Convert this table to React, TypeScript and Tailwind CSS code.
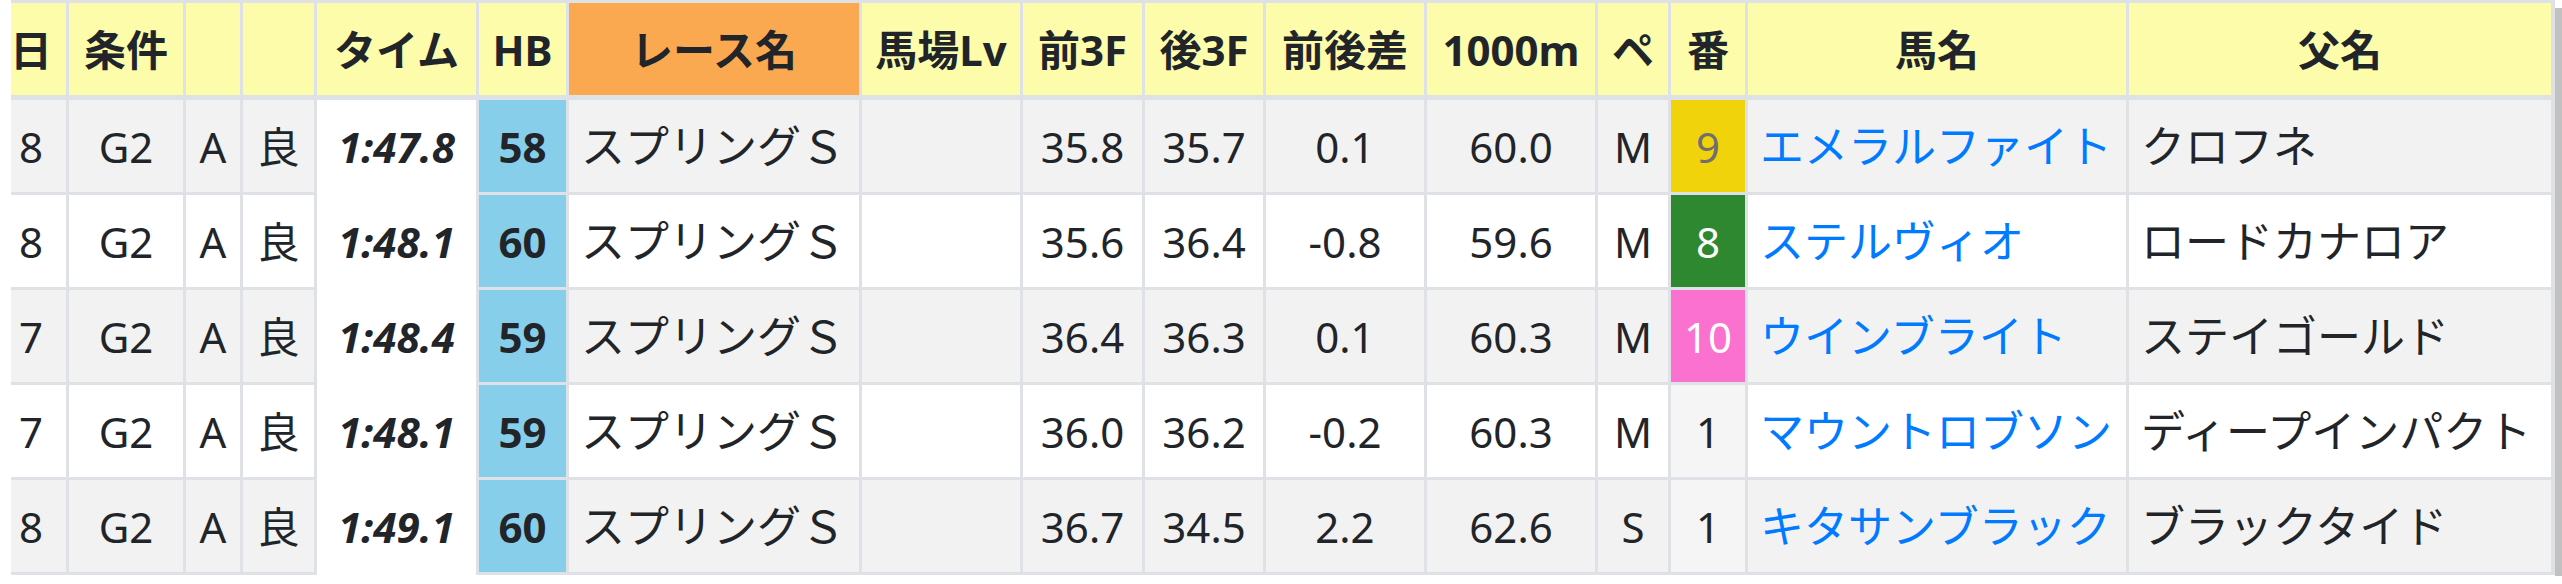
const COLS =
  "grid grid-cols-[55px_114px_54px_71px_159px_87px_290px_158px_119px_118px_158px_168px_70px_74px_378px_422px] gap-x-[3px]";

type Row = {
  day: string;
  cls: string;
  course: string;
  going: string;
  time: string;
  hb: string;
  race: string;
  f3: string;
  l3: string;
  diff: string;
  km: string;
  pace: string;
  no: string;
  noCls: string;
  horse: string;
  sire: string;
};

const rows: Row[] = [
  { day: "8", cls: "G2", course: "A", going: "良", time: "1:47.8", hb: "58", race: "スプリングＳ", f3: "35.8", l3: "35.7", diff: "0.1", km: "60.0", pace: "M", no: "9", noCls: "bg-[#f1d30b] text-[#6f6f6f]", horse: "エメラルファイト", sire: "クロフネ" },
  { day: "8", cls: "G2", course: "A", going: "良", time: "1:48.1", hb: "60", race: "スプリングＳ", f3: "35.6", l3: "36.4", diff: "-0.8", km: "59.6", pace: "M", no: "8", noCls: "bg-[#2e8830] text-white", horse: "ステルヴィオ", sire: "ロードカナロア" },
  { day: "7", cls: "G2", course: "A", going: "良", time: "1:48.4", hb: "59", race: "スプリングＳ", f3: "36.4", l3: "36.3", diff: "0.1", km: "60.3", pace: "M", no: "10", noCls: "bg-[#fb71cf] text-white", horse: "ウインブライト", sire: "ステイゴールド" },
  { day: "7", cls: "G2", course: "A", going: "良", time: "1:48.1", hb: "59", race: "スプリングＳ", f3: "36.0", l3: "36.2", diff: "-0.2", km: "60.3", pace: "M", no: "1", noCls: "bg-[#f5f5f5] text-[#212529]", horse: "マウントロブソン", sire: "ディープインパクト" },
  { day: "8", cls: "G2", course: "A", going: "良", time: "1:49.1", hb: "60", race: "スプリングＳ", f3: "36.7", l3: "34.5", diff: "2.2", km: "62.6", pace: "S", no: "1", noCls: "bg-[#f5f5f5] text-[#212529]", horse: "キタサンブラック", sire: "ブラックタイド" },
];

const headers = ["日", "条件", "", "", "タイム", "HB", "レース名", "馬場Lv", "前3F", "後3F", "前後差", "1000m", "ペ", "番", "馬名", "父名"];

export default function App() {
  return (
    <div className="flex h-[584px] w-[2562px] bg-white font-['Noto_Sans','Noto_Sans_CJK_JP',sans-serif] text-[42px] text-[#212529]">
      <div className="ml-[11px] w-[2544px] self-start bg-[#dee2e6] pt-[3px] pr-[4px] pb-[3px]">
        <div className={COLS}>
          {headers.map((h, i) => (
            <div
              key={i}
              className={`flex h-[92px] items-center justify-center font-bold ${
                i === 6 ? "bg-[#fba950]" : "bg-[#fcfcab]"
              } ${i === 0 ? "pr-[15px]" : ""}`}
            >
              {h}
            </div>
          ))}
        </div>

        <div className={`${COLS} mt-[5px] gap-y-[3px]`}>
          {/* time column has no row rules */}
          <div className="col-start-5 row-span-5 row-start-1 -mb-[3px] flex flex-col gap-[3px] bg-white">
            {rows.map((r, i) => (
              <div key={i} className="flex h-[92px] items-center justify-center font-bold italic">
                {r.time}
              </div>
            ))}
          </div>

          {rows.map((r, i) => {
            const bg = i % 2 === 0 ? "bg-[#f2f2f2]" : "bg-white";
            const c = `flex h-[92px] items-center justify-center ${bg}`;
            const l = `flex h-[92px] items-center pl-[12px] text-[44px] ${bg}`;
            return [
              <div key={`${i}-d`} className={`${c} pr-[15px]`}>{r.day}</div>,
              <div key={`${i}-c`} className={c}>{r.cls}</div>,
              <div key={`${i}-a`} className={c}>{r.course}</div>,
              <div key={`${i}-g`} className={c}>{r.going}</div>,
              <div key={`${i}-hb`} className="flex h-[92px] items-center justify-center bg-[#87ceeb] font-bold">{r.hb}</div>,
              <div key={`${i}-r`} className={l}>{r.race}</div>,
              <div key={`${i}-lv`} className={c}></div>,
              <div key={`${i}-f3`} className={c}>{r.f3}</div>,
              <div key={`${i}-l3`} className={c}>{r.l3}</div>,
              <div key={`${i}-df`} className={c}>{r.diff}</div>,
              <div key={`${i}-km`} className={c}>{r.km}</div>,
              <div key={`${i}-p`} className={c}>{r.pace}</div>,
              <div key={`${i}-no`} className={`flex h-[92px] items-center justify-center ${r.noCls}`}>{r.no}</div>,
              <div key={`${i}-h`} className={l}>
                <a className="text-[#007bff]">{r.horse}</a>
              </div>,
              <div key={`${i}-s`} className={l}>{r.sire}</div>,
            ];
          })}
        </div>
      </div>
      <div className="mt-[8px] h-[568px] w-[7px] bg-[#c1c1c1]" />
    </div>
  );
}
